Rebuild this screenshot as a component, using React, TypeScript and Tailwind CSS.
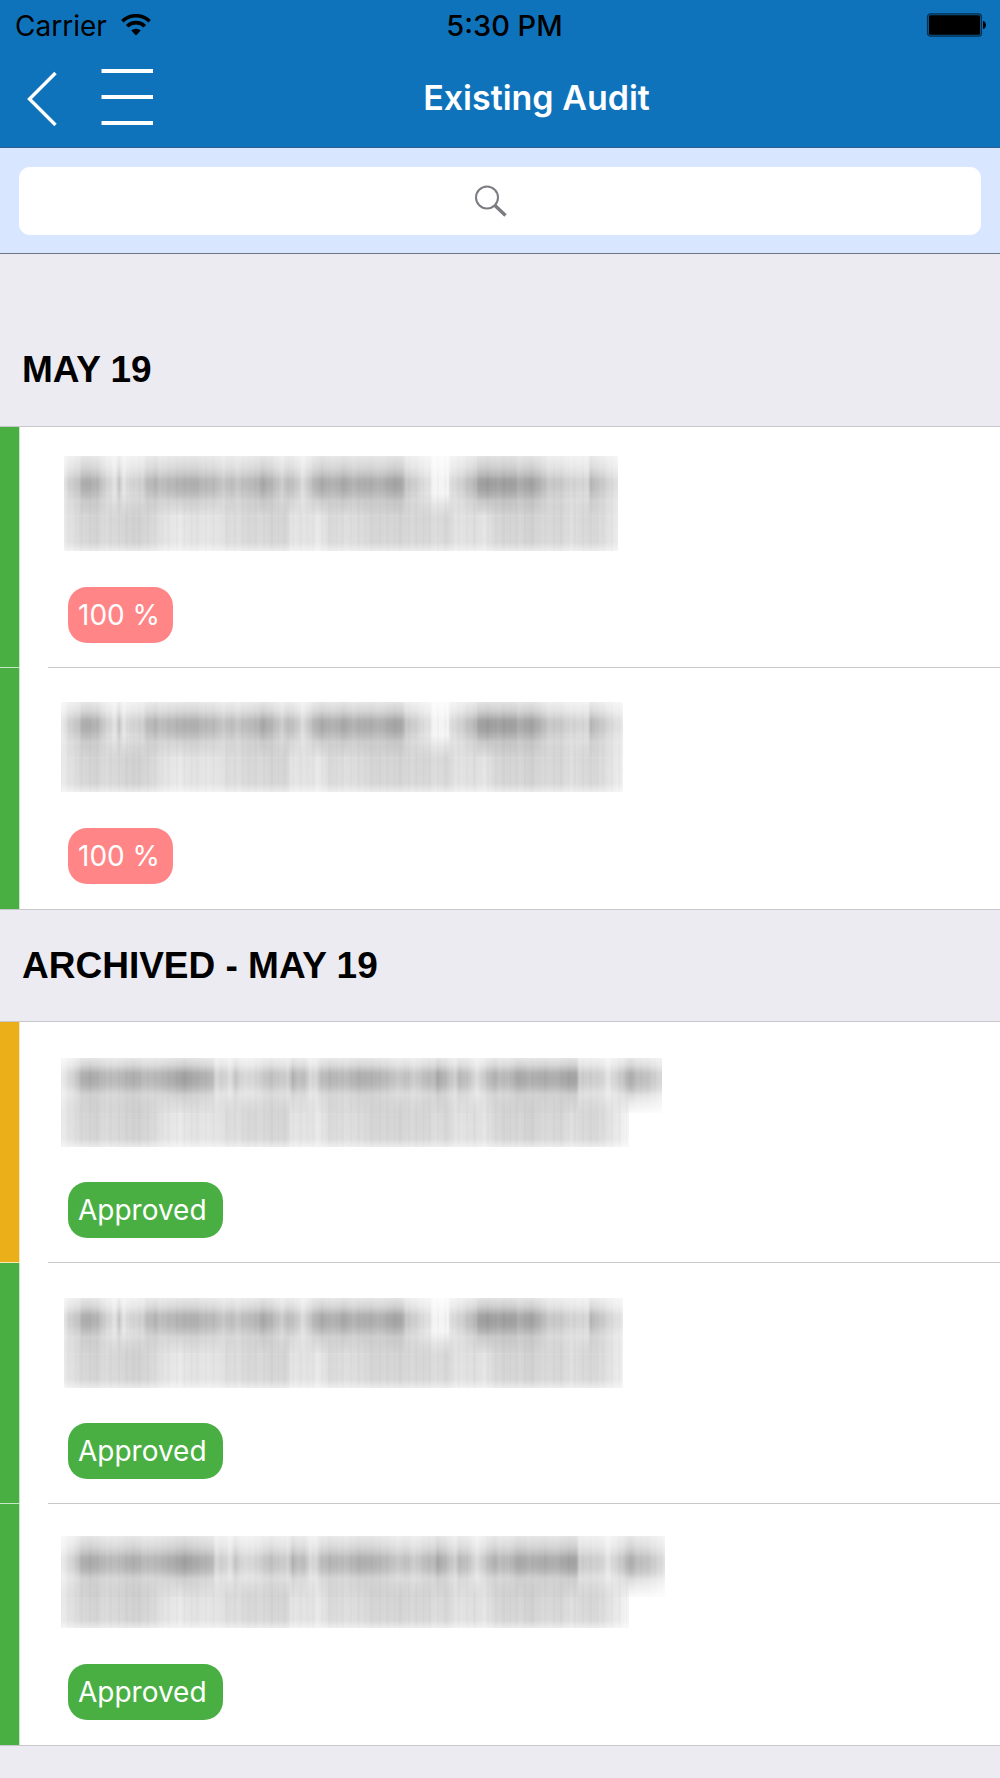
type Stop = [number, number];

interface Audit {
    id: number;
    status: string;
    kind: 'score' | 'approved';
    strip: 'green' | 'amber';
    long: boolean;
    // box of the hidden name: left, top, right, end of first line, bottom
    box: [number, number, number, number, number];
    // where the dark band of the first line starts, from the top of the box
    band: number;
}

interface Section {
    title: string;
    audits: Audit[];
}

const SECTIONS: Section[] = [
    {
        title: 'MAY 19',
        audits: [
            { id: 1, status: '100 %', kind: 'score', strip: 'green', long: false, box: [64, 29, 618, 88, 124], band: 22 },
            { id: 2, status: '100 %', kind: 'score', strip: 'green', long: false, box: [61, 34, 623, 89, 124], band: 17 },
        ],
    },
    {
        title: 'ARCHIVED - MAY 19',
        audits: [
            { id: 3, status: 'Approved', kind: 'approved', strip: 'amber', long: true, box: [61, 36, 662, 91, 125], band: 14 },
            { id: 4, status: 'Approved', kind: 'approved', strip: 'green', long: false, box: [64, 35, 623, 90, 125], band: 16 },
            { id: 5, status: 'Approved', kind: 'approved', strip: 'green', long: true, box: [61, 32, 665, 93, 124], band: 20 },
        ],
    },
];

// [x, grey level] along the first line of a short name
const SHORT_LINE: Stop[] = [
    [61, 236], [66, 222], [70, 208], [80, 192], [82, 176], [87, 170], [98, 182], [106, 208], [115, 226], [119, 198],
    [124, 229], [130, 212], [143, 208], [146, 190], [156, 180], [160, 190], [170, 184], [180, 178], [194, 174], [204, 184],
    [215, 186], [224, 200], [232, 186], [236, 200], [246, 188], [258, 182], [262, 166], [272, 182], [283, 206], [288, 186],
    [298, 203], [302, 222], [308, 204], [316, 180], [322, 168], [330, 178], [337, 176], [345, 166], [352, 180], [360, 174],
    [370, 172], [380, 178], [396, 162], [403, 172], [406, 198], [415, 207], [430, 228], [433, 244], [448, 244], [450, 222],
    [462, 208], [468, 194], [476, 184], [478, 162], [488, 156], [498, 163], [504, 158], [515, 160], [518, 174], [531, 160],
    [540, 178], [548, 200], [560, 200], [570, 212], [588, 214], [591, 182], [600, 198], [610, 215], [623, 232],
];

const LONG_LINE: Stop[] = [
    [61, 236], [68, 222], [75, 205], [80, 186], [82, 176], [90, 168], [98, 176], [108, 188], [118, 186], [134, 172],
    [145, 186], [155, 185], [170, 174], [185, 160], [198, 172], [212, 182], [216, 215], [222, 205], [230, 222], [236, 196],
    [242, 217], [255, 214], [270, 192], [288, 208], [293, 178], [300, 195], [304, 186], [310, 215], [316, 215], [320, 192],
    [330, 180], [345, 188], [360, 174], [375, 178], [390, 190], [400, 202], [405, 190], [415, 206], [425, 188], [434, 186],
    [438, 166], [448, 190], [455, 207], [460, 184], [470, 198], [476, 222], [485, 200], [494, 176], [500, 188], [510, 184],
    [519, 166], [530, 176], [545, 170], [555, 176], [570, 160], [577, 168], [579, 204], [600, 208], [608, 228], [614, 214],
    [622, 200], [630, 172], [638, 190], [645, 192], [655, 206], [665, 226],
];

const SECOND_LINE: Stop[] = [
    [61, 236], [70, 226], [80, 216], [95, 210], [105, 218], [120, 214], [135, 208], [150, 214], [165, 227], [180, 233],
    [192, 225], [205, 229], [220, 227], [228, 219], [240, 221], [248, 214], [260, 217], [272, 212], [288, 214], [291, 228],
    [310, 226], [318, 233], [332, 216], [345, 222], [360, 219], [375, 212], [387, 214], [400, 211], [412, 216], [425, 213],
    [436, 220], [448, 214], [456, 227], [475, 222], [485, 229], [494, 216], [508, 211], [520, 214], [530, 208], [545, 217],
    [560, 213], [572, 223], [580, 217], [595, 214], [605, 222], [615, 231], [630, 246],
];

const FONT = 'font-[Inter,"Liberation_Sans",sans-serif]';

function GreyStops({ stops, from, to }: { stops: Stop[]; from: number; to: number }) {
    return (
        <>
            {stops.map(([x, grey]) => (
                <stop key={x} offset={(x - from) / (to - from)} stopColor="#000" stopOpacity={(255 - grey) / 255} />
            ))}
        </>
    );
}

function HiddenName({ audit }: { audit: Audit }) {
    const [left, top, right, split, bottom] = audit.box;
    const id = `name-${audit.id}`;
    const lowerRight = audit.long ? 629 : right;
    const fade = [
        [0, 0.3],
        [audit.band * 0.5, 0.5],
        [audit.band - 2, 0.78],
        [audit.band + 1, 0.95],
        [audit.band + 6, 1],
        [audit.band + 12, 0.95],
        [audit.band + 18, 0.75],
        [audit.band + 23, 0.45],
        [audit.band + 31, 0.25],
        [split - top, 0.06],
    ];

    return (
        <svg className="block h-[160px] w-[680px] shrink-0" viewBox="20 0 680 160" role="img" aria-label="Hidden name">
            <defs>
                <linearGradient id={`${id}-a`} gradientUnits="userSpaceOnUse" x1="61" x2="665" y1="0" y2="0">
                    <GreyStops stops={audit.long ? LONG_LINE : SHORT_LINE} from={61} to={665} />
                </linearGradient>
                <linearGradient id={`${id}-b`} gradientUnits="userSpaceOnUse" x1="61" x2="630" y1="0" y2="0">
                    <GreyStops stops={SECOND_LINE} from={61} to={630} />
                </linearGradient>
                <linearGradient id={`${id}-va`} x1="0" x2="0" y1="0" y2="1">
                    {fade.map(([y, opacity]) => (
                        <stop key={y} offset={y / (split - top)} stopColor="#fff" stopOpacity={opacity} />
                    ))}
                </linearGradient>
                <linearGradient id={`${id}-vb`} x1="0" x2="0" y1="0" y2="1">
                    <stop offset="0" stopColor="#fff" stopOpacity="0" />
                    <stop offset="0.2" stopColor="#fff" stopOpacity="0.6" />
                    <stop offset="0.42" stopColor="#fff" stopOpacity="1" />
                    <stop offset="0.85" stopColor="#fff" stopOpacity="0.95" />
                    <stop offset="1" stopColor="#fff" stopOpacity="0.45" />
                </linearGradient>
                <mask id={`${id}-ma`}>
                    <rect x={left} y={top} width={right - left} height={split - top} fill={`url(#${id}-va)`} />
                </mask>
                <mask id={`${id}-mb`}>
                    <rect x={left} y={split - 22} width={lowerRight - left} height={bottom - split + 22} fill={`url(#${id}-vb)`} />
                </mask>
                <pattern id={`${id}-p`} patternUnits="userSpaceOnUse" width="29" height="160">
                    <path d="M2 0h2v160h-2zM9 0h3v160h-3zM17 0h1v160h-1zM22 0h3v160h-3z" fill="#000" fillOpacity="0.018" />
                </pattern>
            </defs>
            <g mask={`url(#${id}-ma)`}>
                <rect x={left} y={top} width={right - left} height={split - top} fill={`url(#${id}-a)`} />
                <rect x={left} y={top} width={right - left} height={split - top} fill={`url(#${id}-p)`} />
            </g>
            <g mask={`url(#${id}-mb)`}>
                <rect x={left} y={split - 22} width={lowerRight - left} height={bottom - split + 22} fill={`url(#${id}-b)`} />
                <rect x={left} y={split - 22} width={lowerRight - left} height={bottom - split + 22} fill={`url(#${id}-p)`} />
            </g>
        </svg>
    );
}

function AuditRow({ audit, last }: { audit: Audit; last: boolean }) {
    return (
        <li className={`flex bg-white ${last ? 'h-[242px] border-b border-[#c8c7cc]' : 'h-[241px]'}`}>
            <div
                className={`w-5 shrink-0 border-r border-white/70 ${last ? '' : 'border-b'} ${
                    audit.strip === 'amber' ? 'bg-[#ebaf1a]' : 'bg-[#4aaf43]'
                }`}
            />
            <div className="relative min-w-0 flex-1 overflow-hidden">
                <HiddenName audit={audit} />
                <span
                    className={`ml-12 inline-flex h-14 items-center rounded-[19px] pl-[10px] text-[28px] text-white ${
                        audit.kind === 'score' ? 'bg-[#ff8587] pr-[13px]' : 'bg-[#4aaf43] pr-4'
                    }`}
                >
                    {audit.status}
                </span>
                {!last && <div className="absolute right-0 bottom-0 left-7 h-px bg-[#c8c7cc]" />}
            </div>
        </li>
    );
}

function StatusBar() {
    return (
        <div className="grid h-[52px] grid-cols-3 items-center pr-[14px] pl-[15px] text-[28px] text-black">
            <div className="flex items-center gap-[14px]">
                <span>Carrier</span>
                <svg className="mb-0.5 h-[22px] w-[30px]" viewBox="0 0 30 22" aria-label="Wi-Fi">
                    <path d="M1.4 7.2a19.4 19.4 0 0 1 27.2 0" fill="none" stroke="#000" strokeWidth="3.6" />
                    <path d="M6.2 12.2a12.6 12.6 0 0 1 17.6 0" fill="none" stroke="#000" strokeWidth="3.6" />
                    <path d="M10.3 16.6a6.8 6.8 0 0 1 9.4 0L15 21.6z" fill="#000" />
                </svg>
            </div>
            <span className="pl-2 text-center text-[29px] font-medium">5:30 PM</span>
            <svg className="mb-0.5 h-6 w-[60px] justify-self-end" viewBox="0 0 60 24" aria-label="Battery full">
                <rect x="1.5" y="0.8" width="54" height="22.4" rx="3" fill="#0b5a93" stroke="#04304f" strokeWidth="1.2" />
                <rect x="3" y="2.2" width="51" height="19.6" rx="1.6" fill="#000" />
                <path d="M57 8c4 1 4 7 0 8z" fill="#000" />
            </svg>
        </div>
    );
}

export default function App() {
    return (
        <div className={`min-h-screen bg-[#ebebf1] ${FONT}`}>
            <header className="border-b border-[#2b5f8c] bg-[#0f73bc]">
                <StatusBar />
                <div className="flex h-[95px] items-center pb-1">
                    <button type="button" aria-label="Back" className="ml-6 h-14 w-9">
                        <svg className="h-14 w-9" viewBox="0 0 36 56" fill="none" stroke="#fff" strokeWidth="3.4">
                            <path d="M31.5 3 5.5 29l26 26" />
                        </svg>
                    </button>
                    <button type="button" aria-label="Menu" className="ml-[41px] h-[60px] w-[52px]">
                        <svg className="h-[60px] w-[52px]" viewBox="0 0 52 60" stroke="#fff" strokeWidth="3.8">
                            <path d="M0.5 3h52M0.5 29h52M0.5 55h52" />
                        </svg>
                    </button>
                    <h1 className="flex-1 pr-20 text-center text-[34px] font-semibold text-white">Existing Audit</h1>
                </div>
            </header>

            <div className="relative border-b border-[#6f7683] bg-[#d8e6ff] px-[19px] pt-[19px] pb-[18px]">
                <input
                    type="search"
                    aria-label="Search audits"
                    className="block h-[68px] w-full rounded-[11px] bg-white px-6 text-center text-[28px] outline-none"
                />
                <svg
                    className="pointer-events-none absolute top-9 left-1/2 -ml-[26px] h-[34px] w-[34px]"
                    viewBox="0 0 34 34"
                    fill="none"
                    stroke="#7b7b81"
                >
                    <circle cx="13" cy="13.5" r="11" strokeWidth="2" />
                    <path d="M21 21.5 31.5 31.5" strokeWidth="3.4" />
                </svg>
            </div>

            <main>
                {SECTIONS.map((section, i) => (
                    <section key={section.title}>
                        <h2
                            className={`border-b border-[#c8c7cc] px-[22px] font-["Liberation_Sans",Arial,sans-serif] text-[37px] leading-10 font-bold text-black ${
                                i === 0 ? 'pt-24 pb-9' : 'pt-9 pb-[35px]'
                            }`}
                        >
                            {section.title}
                        </h2>
                        <ul>
                            {section.audits.map((audit, n) => (
                                <AuditRow key={audit.id} audit={audit} last={n === section.audits.length - 1} />
                            ))}
                        </ul>
                    </section>
                ))}
            </main>
        </div>
    );
}
